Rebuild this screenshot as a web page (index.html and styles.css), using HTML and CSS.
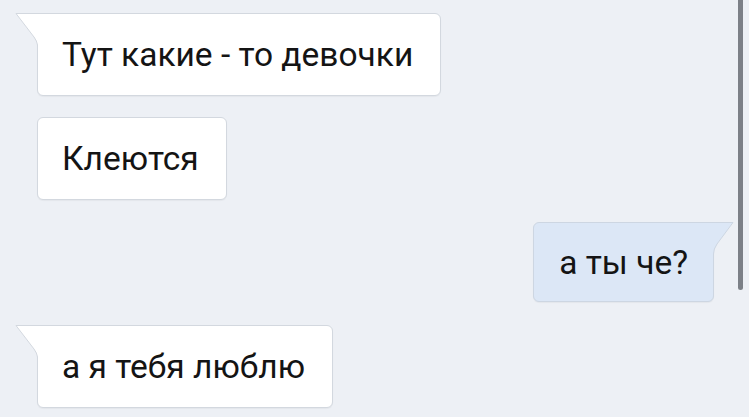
FILE: index.html
```html
<!DOCTYPE html>
<html lang="ru">
<head>
  <meta charset="UTF-8">
  <meta name="viewport" content="width=device-width, initial-scale=1.0">
  <link rel="stylesheet" href="styles.css">
  <title>Диалог</title>
</head>
<body>
  <main class="chat">
    <div class="msg in">
      <svg class="tail" width="23" height="32" viewBox="0 0 23 32"><path d="M23 0.5 H1 L19 24 Q22 28 22.5 32 H23 Z" fill="#fff"/><path d="M23 0.5 H1 L19 24 Q22 28 22.5 32" fill="none" stroke="#d3d8df"/></svg>
      <p class="text">Тут какие - то девочки</p>
    </div>
    <div class="msg in plain">
      <p class="text">Клеются</p>
    </div>
    <div class="msg out">
      <p class="text">а ты че?</p>
      <svg class="tail" width="21" height="32" viewBox="0 0 21 32"><path d="M0 0.5 H20 L4 22 Q0.5 27 0.5 32 H0 Z" fill="#dce7f6"/><path d="M0 0.5 H20 L4 22 Q0.5 27 0.5 32" fill="none" stroke="#cdd6e2"/></svg>
    </div>
    <div class="msg in">
      <svg class="tail" width="23" height="32" viewBox="0 0 23 32"><path d="M23 0.5 H1 L19 24 Q22 28 22.5 32 H23 Z" fill="#fff"/><path d="M23 0.5 H1 L19 24 Q22 28 22.5 32" fill="none" stroke="#d3d8df"/></svg>
      <p class="text">а я тебя люблю</p>
    </div>
  </main>
  <div class="scrollbar"></div>
</body>
</html>
```

FILE: styles.css
```css
* {
  margin: 0;
  padding: 0;
  box-sizing: border-box;
}

html {
  background-color: #edf0f5;
}

body {
  display: flex;
  font-family: Roboto, "Noto Sans", sans-serif;
  color: #141414;
  block-size: 417px;
  overflow: hidden;
}

.chat {
  flex: 1;
  display: flex;
  flex-direction: column;
  padding: 13px 0 0 15px;
}

.msg {
  display: flex;
  align-items: flex-start;
}

.msg.plain {
  margin-top: 21px;
  padding-left: 22px;
}

.msg.out {
  align-self: flex-end;
  margin-top: 22px;
}

.msg.out + .msg {
  margin-top: 23px;
}

.tail {
  display: block;
  position: relative;
  z-index: 1;
  margin-right: -1px;
}

.out .tail {
  margin-right: 0;
  margin-left: -1px;
}

.text {
  display: flex;
  align-items: center;
  block-size: 83px;
  padding: 0 27px 0 24px;
  font-size: 33.5px;
  background-color: #fff;
  border: 1px solid #d3d8df;
  border-radius: 6px;
  box-shadow: 0 1px 1px rgba(0, 0, 0, 0.04);
}

.in .tail + .text {
  border-top-left-radius: 0;
}

.out .text {
  block-size: 80px;
  background-color: #dce7f6;
  border-color: #cdd6e2;
  border-top-right-radius: 0;
  padding: 0 25px 0 25px;
}

.scrollbar {
  inline-size: 5px;
  block-size: 290px;
  margin: 0 6px 0 4px;
  background-color: #7c8087;
  border-radius: 0 0 3px 3px;
}
```
